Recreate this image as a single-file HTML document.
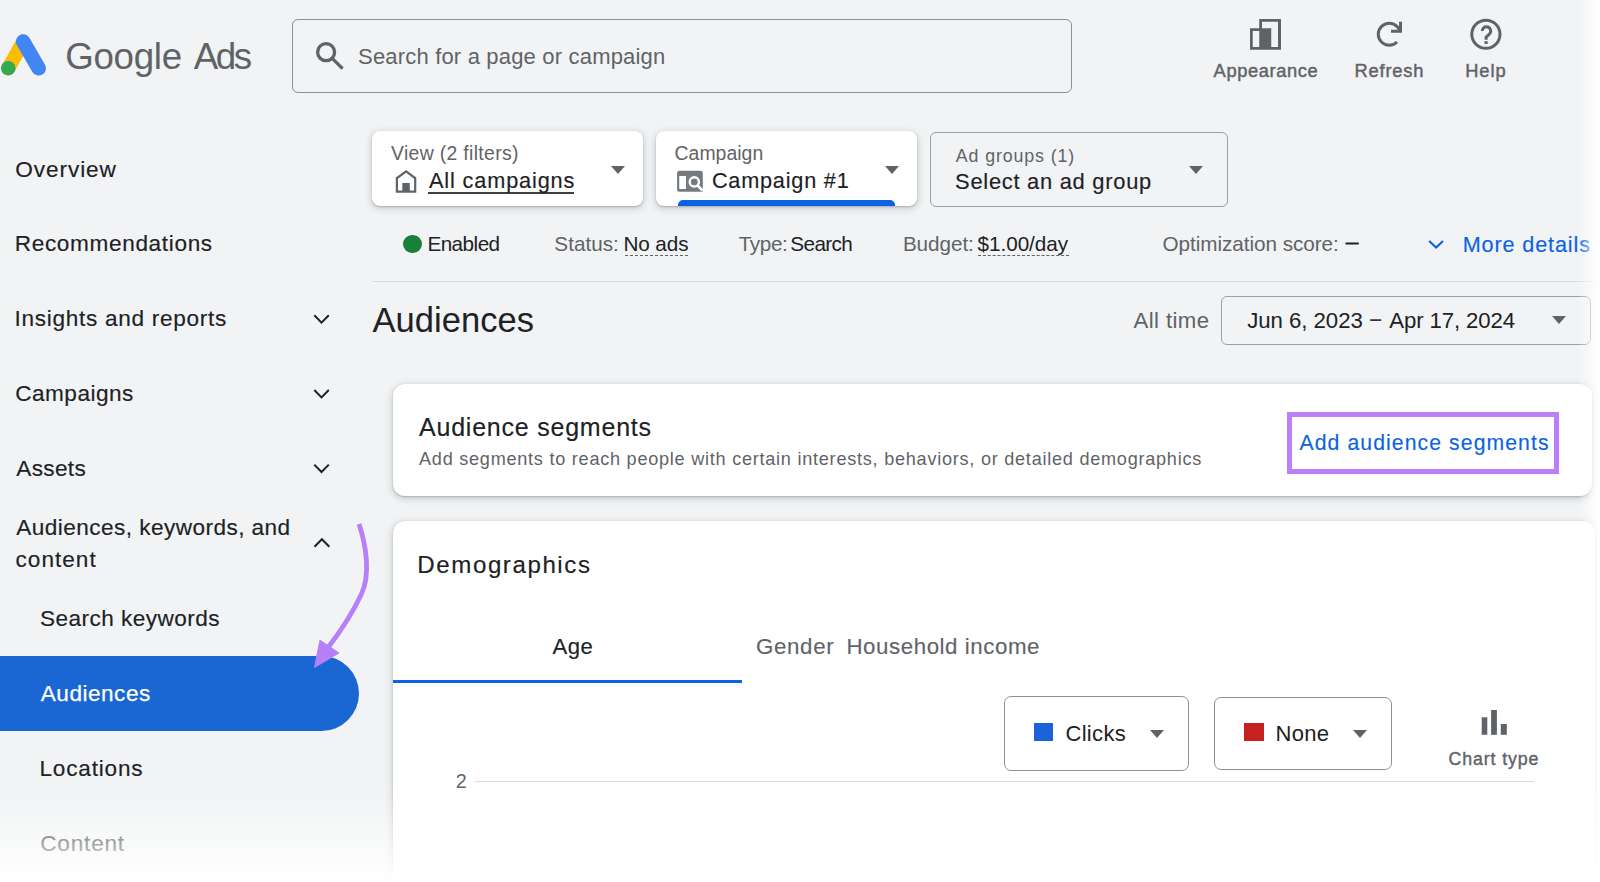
<!DOCTYPE html>
<html><head><meta charset="utf-8">
<style>
html,body{margin:0;padding:0;}
body{width:1600px;height:882px;overflow:hidden;background:#f1f3f4;position:relative;font-family:"Liberation Sans",sans-serif;}
.t{position:absolute;white-space:nowrap;}
.a{position:absolute;}
svg{position:absolute;overflow:visible;}
.card{position:absolute;background:#fff;border-radius:8px;box-shadow:0 1px 2px rgba(60,64,67,.30),0 2px 6px 2px rgba(60,64,67,.15);}
.tri{position:absolute;width:0;height:0;border-left:7.5px solid transparent;border-right:7.5px solid transparent;border-top:8px solid #5f6368;}
</style></head><body>

<!-- logo -->
<svg style="left:0;top:0" width="60" height="90" viewBox="0 0 60 90">
  <line x1="8.3" y1="68.3" x2="23.2" y2="41.6" stroke="#fbbc04" stroke-width="14" stroke-linecap="round"/>
  <line x1="23.2" y1="41.6" x2="38.7" y2="68.3" stroke="#4285f4" stroke-width="14.6" stroke-linecap="round"/>
  <circle cx="8.2" cy="68.2" r="7.3" fill="#34a853"/>
</svg>

<!-- search box -->
<div class="a" style="left:292px;top:19px;width:778px;height:72px;border:1px solid #8d9196;border-radius:6px;"></div>
<svg style="left:0;top:0" width="1" height="1" fill="none" stroke="#5f6368">
  <circle cx="326.1" cy="52.2" r="8.5" stroke-width="3.3"/>
  <path d="M332.2 58.4L342.6 68.6" stroke-width="3.3"/>
</svg>

<!-- appearance icon -->
<svg style="left:0;top:0" width="1" height="1">
  <path fill="#5f6368" fill-rule="evenodd" d="M1250 28.25H1259.2V19H1281V49.75H1250Z M1252.75 31H1259.25V47H1252.75Z M1262 21.75H1278V47H1271.25V28.25H1262Z"/>
</svg>
<!-- refresh icon -->
<svg style="left:0;top:0" width="1" height="1">
  <path d="M1397.03 42.03A11 11 0 1 1 1397.2 26.6L1400.6 31.2" fill="none" stroke="#5f6368" stroke-width="3"/>
  <path fill="#5f6368" d="M1399 21.8H1402V32.7H1391V29.8H1399Z"/>
</svg>
<!-- help icon -->
<svg style="left:0;top:0" width="1" height="1" fill="none" stroke="#5f6368">
  <circle cx="1485.9" cy="34.25" r="14.1" stroke-width="3"/>
  <path d="M1482.25 31A4.25 4.25 0 1 1 1489.76 33.73L1486.1 37.2V39.8" stroke-width="3"/>
  <rect x="1484.5" y="41.2" width="3.2" height="2.7" fill="#5f6368" stroke="none"/>
</svg>

<!-- sidebar selected pill -->
<div class="a" style="left:0;top:656px;width:359px;height:75px;background:#1a66d2;border-radius:0 37.5px 37.5px 0;"></div>

<!-- sidebar chevrons -->
<svg style="left:0;top:0" width="1" height="1" fill="none" stroke="#202124" stroke-width="2">
  <path d="M314.3 315.2L321.5 322.6L328.8 315.2"/>
  <path d="M314.3 390L321.5 397.4L328.8 390"/>
  <path d="M314.3 464.6L321.5 472L328.8 464.6"/>
  <path d="M314.5 546.8L321.9 539.2L329.3 546.8"/>
</svg>

<!-- filter card 1 -->
<div class="card" style="left:372px;top:131px;width:271px;height:75px;"></div>
<div class="tri" style="left:611px;top:165.5px;"></div>
<div class="a" style="left:428px;top:192px;width:146px;height:2px;background:#3c4043;"></div>
<svg style="left:0;top:0" width="1" height="1">
  <path fill="#5f6368" fill-rule="evenodd" d="M395.8 177.6L406.1 170.1L416.3 177.6V192.75H395.8Z M398 178.7L406.1 172.8L414.1 178.7V190.6H409.8V183H402.3V190.6H398Z"/>
</svg>
<!-- filter card 2 -->
<div class="card" style="left:656px;top:131px;width:261px;height:75px;overflow:hidden;">
  <div class="a" style="left:22px;top:69px;width:217px;height:10px;background:#0b63e3;border-radius:5px 5px 0 0;"></div>
</div>
<div class="tri" style="left:885px;top:165.5px;"></div>
<svg style="left:0;top:0" width="1" height="1">
  <path fill="#757a7f" fill-rule="evenodd" d="M679.6 170.8H700.3A2.5 2.5 0 0 1 702.8 173.3V191.7H679.6A2.5 2.5 0 0 1 677.1 189.2V173.3A2.5 2.5 0 0 1 679.6 170.8Z M679.25 175.9H686V188.9H679.25Z"/>
  <circle cx="694.3" cy="181.9" r="4.6" fill="none" stroke="#fff" stroke-width="2.4"/>
  <path d="M697.6 185.4L702.6 190.6" stroke="#fff" stroke-width="2.6"/>
</svg>
<!-- filter card 3 -->
<div class="a" style="left:930px;top:131.5px;width:296px;height:73px;border:1.2px solid #9aa0a6;border-radius:6px;"></div>
<div class="tri" style="left:1188.5px;top:165.6px;"></div>

<!-- status row -->
<div class="a" style="left:403px;top:234.5px;width:18.5px;height:18.5px;border-radius:50%;background:#188038;"></div>
<div class="a" style="left:625px;top:255px;width:63px;height:0;border-top:1px dashed #5f6368;"></div>
<div class="a" style="left:978px;top:254.5px;width:91px;height:0;border-top:1px dashed #5f6368;"></div>
<svg style="left:0;top:0" width="1" height="1"><rect x="1345.3" y="242.55" width="13.7" height="1.9" rx="0.9" fill="#202124"/></svg>
<svg style="left:0;top:0" width="1" height="1"><rect x="1370.25" y="319.3" width="11" height="1.6" fill="#202124"/></svg>
<svg style="left:0;top:0" width="1" height="1" fill="none" stroke="#0b63e3" stroke-width="2.2">
  <path d="M1429.2 241L1436.1 247.6L1443 241"/>
</svg>

<!-- divider -->
<div class="a" style="left:372px;top:280.5px;width:1228px;height:1px;background:#dadce0;"></div>

<!-- date box -->
<div class="a" style="left:1221px;top:295.5px;width:368px;height:47.2px;border:1.2px solid #9aa0a6;border-radius:6px;"></div>
<div class="tri" style="left:1551.5px;top:316.3px;"></div>

<!-- audience segments card -->
<div class="card" style="left:393px;top:384px;width:1199px;height:112px;border-radius:12px;"></div>
<div class="a" style="left:1287px;top:411.6px;width:262.3px;height:52px;border:5px solid #bb80f7;"></div>

<!-- demographics card -->
<div class="card" style="left:393px;top:521px;width:1202px;height:420px;border-radius:12px;"></div>
<div class="a" style="left:393px;top:680px;width:349px;height:3px;background:#0b63e3;"></div>

<!-- dropdowns -->
<div class="a" style="left:1003.5px;top:696.3px;width:183.7px;height:72.4px;border:1.2px solid #8d9196;border-radius:7px;"></div>
<div class="a" style="left:1034.4px;top:722.5px;width:18.4px;height:18.5px;background:#1a62d9;"></div>
<div class="tri" style="left:1149.8px;top:730.2px;"></div>
<div class="a" style="left:1214.2px;top:696.6px;width:175.8px;height:71.9px;border:1.2px solid #8d9196;border-radius:7px;"></div>
<div class="a" style="left:1244.4px;top:722.8px;width:19.6px;height:18px;background:#c5221f;"></div>
<div class="tri" style="left:1353px;top:730.2px;"></div>
<svg style="left:0;top:0" width="1" height="1" fill="#5f6368">
  <rect x="1481.7" y="717.3" width="5.6" height="17.5"/>
  <rect x="1491.1" y="710" width="5.8" height="24.8"/>
  <rect x="1500.8" y="724" width="6" height="10.8"/>
</svg>

<!-- chart gridline -->
<div class="a" style="left:474.5px;top:781px;width:1059px;height:1.3px;background:#dadce0;"></div>

<div class="t" id="logo1" style="left:65.28px;top:39px;font-size:36.7px;line-height:36.7px;color:#5f6368;letter-spacing:-0.307px">Google</div>
<div class="t" id="logo2" style="left:193.75px;top:39px;font-size:36.7px;line-height:36.7px;color:#5f6368;letter-spacing:-2.421px">Ads</div>
<div class="t" id="search" style="left:358.06px;top:46px;font-size:22.0px;line-height:22.0px;color:#5f6368;letter-spacing:0.182px">Search for a page or campaign</div>
<div class="t" id="appear" style="left:1213.60px;top:62px;font-size:18.3px;line-height:18.3px;color:#5f6368;letter-spacing:0.605px;-webkit-text-stroke:0.45px #5f6368">Appearance</div>
<div class="t" id="refresh" style="left:1354.57px;top:62px;font-size:18.3px;line-height:18.3px;color:#5f6368;letter-spacing:0.797px;-webkit-text-stroke:0.45px #5f6368">Refresh</div>
<div class="t" id="help" style="left:1465.17px;top:62px;font-size:18.3px;line-height:18.3px;color:#5f6368;letter-spacing:0.978px;-webkit-text-stroke:0.45px #5f6368">Help</div>
<div class="t" id="nav1" style="left:15.14px;top:159px;font-size:22.6px;line-height:22.6px;color:#202124;letter-spacing:0.950px;-webkit-text-stroke:0.15px #202124">Overview</div>
<div class="t" id="nav2" style="left:14.73px;top:233px;font-size:22.6px;line-height:22.6px;color:#202124;letter-spacing:0.646px;-webkit-text-stroke:0.15px #202124">Recommendations</div>
<div class="t" id="nav3" style="left:14.53px;top:308px;font-size:22.6px;line-height:22.6px;color:#202124;letter-spacing:0.699px;-webkit-text-stroke:0.15px #202124">Insights and reports</div>
<div class="t" id="nav4" style="left:15.24px;top:383px;font-size:22.6px;line-height:22.6px;color:#202124;letter-spacing:0.469px;-webkit-text-stroke:0.15px #202124">Campaigns</div>
<div class="t" id="nav5" style="left:16.30px;top:458px;font-size:22.6px;line-height:22.6px;color:#202124;letter-spacing:0.317px;-webkit-text-stroke:0.15px #202124">Assets</div>
<div class="t" id="nav6" style="left:16.30px;top:517px;font-size:22.6px;line-height:22.6px;color:#202124;letter-spacing:0.441px;-webkit-text-stroke:0.15px #202124">Audiences, keywords, and</div>
<div class="t" id="nav7" style="left:15.59px;top:549px;font-size:22.6px;line-height:22.6px;color:#202124;letter-spacing:0.999px;-webkit-text-stroke:0.15px #202124">content</div>
<div class="t" id="nav8" style="left:40.09px;top:608px;font-size:22.6px;line-height:22.6px;color:#202124;letter-spacing:0.448px;-webkit-text-stroke:0.15px #202124">Search keywords</div>
<div class="t" id="nav9" style="left:40.80px;top:683px;font-size:22.6px;line-height:22.6px;color:#ffffff;letter-spacing:0.496px;-webkit-text-stroke:0.25px #ffffff">Audiences</div>
<div class="t" id="nav10" style="left:39.48px;top:758px;font-size:22.6px;line-height:22.6px;color:#202124;letter-spacing:0.810px;-webkit-text-stroke:0.15px #202124">Locations</div>
<div class="t" id="nav11" style="left:40.19px;top:833px;font-size:22.6px;line-height:22.6px;color:#202124;letter-spacing:0.804px;-webkit-text-stroke:0.15px #202124">Content</div>
<div class="t" id="f1l" style="left:391.00px;top:144px;font-size:19.4px;line-height:19.4px;color:#5f6368;letter-spacing:0.331px">View (2 filters)</div>
<div class="t" id="f1v" style="left:429.00px;top:170px;font-size:21.7px;line-height:21.7px;color:#202124;letter-spacing:0.862px;-webkit-text-stroke:0.15px #202124">All campaigns</div>
<div class="t" id="f2l" style="left:674.49px;top:144px;font-size:19.4px;line-height:19.4px;color:#5f6368;letter-spacing:0.053px">Campaign</div>
<div class="t" id="f2v" style="left:711.88px;top:170px;font-size:21.7px;line-height:21.7px;color:#202124;letter-spacing:0.782px;-webkit-text-stroke:0.15px #202124">Campaign #1</div>
<div class="t" id="f3l" style="left:955.80px;top:148px;font-size:17.8px;line-height:17.8px;color:#5f6368;letter-spacing:0.890px">Ad groups (1)</div>
<div class="t" id="f3v" style="left:955.12px;top:171px;font-size:21.9px;line-height:21.9px;color:#202124;letter-spacing:0.725px;-webkit-text-stroke:0.15px #202124">Select an ad group</div>
<div class="t" id="st1" style="left:427.38px;top:234px;font-size:20.7px;line-height:20.7px;color:#202124;letter-spacing:-0.531px">Enabled</div>
<div class="t" id="st2" style="left:554.35px;top:234px;font-size:20.7px;line-height:20.7px;color:#5f6368;letter-spacing:0.014px">Status:</div>
<div class="t" id="st3" style="left:623.38px;top:234px;font-size:20.7px;line-height:20.7px;color:#202124;letter-spacing:-0.065px">No ads</div>
<div class="t" id="st4" style="left:738.68px;top:234px;font-size:20.7px;line-height:20.7px;color:#5f6368;letter-spacing:-0.359px">Type:</div>
<div class="t" id="st5" style="left:790.35px;top:234px;font-size:20.7px;line-height:20.7px;color:#202124;letter-spacing:-0.616px">Search</div>
<div class="t" id="st6" style="left:902.88px;top:234px;font-size:20.7px;line-height:20.7px;color:#5f6368;letter-spacing:-0.062px">Budget:</div>
<div class="t" id="st7" style="left:977.60px;top:234px;font-size:20.7px;line-height:20.7px;color:#202124;letter-spacing:-0.053px">$1.00/day</div>
<div class="t" id="st8" style="left:1162.53px;top:234px;font-size:20.7px;line-height:20.7px;color:#5f6368;letter-spacing:-0.046px">Optimization score:</div>
<div class="t" id="more" style="left:1462.71px;top:234px;font-size:21.6px;line-height:21.6px;color:#0b63e3;letter-spacing:0.874px;-webkit-text-stroke:0.15px #0b63e3">More details</div>
<div class="t" id="h1" style="left:372.50px;top:303px;font-size:34.5px;line-height:34.5px;color:#202124;letter-spacing:0.058px">Audiences</div>
<div class="t" id="alltime" style="left:1133.50px;top:310px;font-size:22.2px;line-height:22.2px;color:#5f6368;letter-spacing:0.407px">All time</div>
<div class="t" id="date1" style="left:1247.15px;top:310px;font-size:22.2px;line-height:22.2px;color:#202124;letter-spacing:-0.028px">Jun 6, 2023</div>
<div class="t" id="date2" style="left:1389.25px;top:310px;font-size:22.2px;line-height:22.2px;color:#202124;letter-spacing:-0.121px">Apr 17, 2024</div>
<div class="t" id="segt" style="left:419.00px;top:415px;font-size:25.0px;line-height:25.0px;color:#202124;letter-spacing:0.781px;-webkit-text-stroke:0.15px #202124">Audience segments</div>
<div class="t" id="segs" style="left:419.00px;top:450px;font-size:18.1px;line-height:18.1px;color:#5f6368;letter-spacing:0.749px">Add segments to reach people with certain interests, behaviors, or detailed demographics</div>
<div class="t" id="adds" style="left:1299.50px;top:432px;font-size:21.2px;line-height:21.2px;color:#0b63e3;letter-spacing:1.085px;-webkit-text-stroke:0.15px #0b63e3">Add audience segments</div>
<div class="t" id="demo" style="left:417.37px;top:553px;font-size:24.1px;line-height:24.1px;color:#202124;letter-spacing:1.569px;-webkit-text-stroke:0.15px #202124">Demographics</div>
<div class="t" id="age" style="left:552.50px;top:636px;font-size:22.1px;line-height:22.1px;color:#202124;letter-spacing:0.537px;-webkit-text-stroke:0.15px #202124">Age</div>
<div class="t" id="gender" style="left:755.95px;top:636px;font-size:22.3px;line-height:22.3px;color:#5f6368;letter-spacing:0.675px;-webkit-text-stroke:0.15px #5f6368">Gender</div>
<div class="t" id="hh" style="left:846.46px;top:636px;font-size:22.3px;line-height:22.3px;color:#5f6368;letter-spacing:0.556px;-webkit-text-stroke:0.15px #5f6368">Household income</div>
<div class="t" id="clicks" style="left:1065.47px;top:723px;font-size:22.0px;line-height:22.0px;color:#202124;letter-spacing:0.311px">Clicks</div>
<div class="t" id="none" style="left:1275.48px;top:723px;font-size:22.0px;line-height:22.0px;color:#202124;letter-spacing:0.272px">None</div>
<div class="t" id="ctype" style="left:1448.57px;top:751px;font-size:17.8px;line-height:17.8px;color:#5f6368;letter-spacing:0.871px;-webkit-text-stroke:0.4px #5f6368">Chart type</div>
<div class="t" id="two" style="left:455.67px;top:772px;font-size:19.8px;line-height:19.8px;color:#5f6368;letter-spacing:0.000px">2</div>

<!-- annotation arrow -->
<svg style="left:0;top:0" width="1" height="1">
  <path d="M359 524C366 545 371 575 361 595C353 612 340 632 327 649" fill="none" stroke="#b77ff8" stroke-width="4.8" stroke-linecap="butt"/>
  <path d="M314.5 667.5L320 640.2L339 653Z" fill="#b77ff8" stroke="#b77ff8" stroke-width="1" stroke-linejoin="round"/>
</svg>

<!-- fades -->
<div class="a" style="left:0;top:788px;width:1600px;height:94px;background:linear-gradient(to bottom,rgba(255,255,255,0),#fff);"></div>
<div class="a" style="left:1578px;top:0;width:22px;height:882px;background:linear-gradient(to right,rgba(255,255,255,0),#fff);"></div>
</body></html>
